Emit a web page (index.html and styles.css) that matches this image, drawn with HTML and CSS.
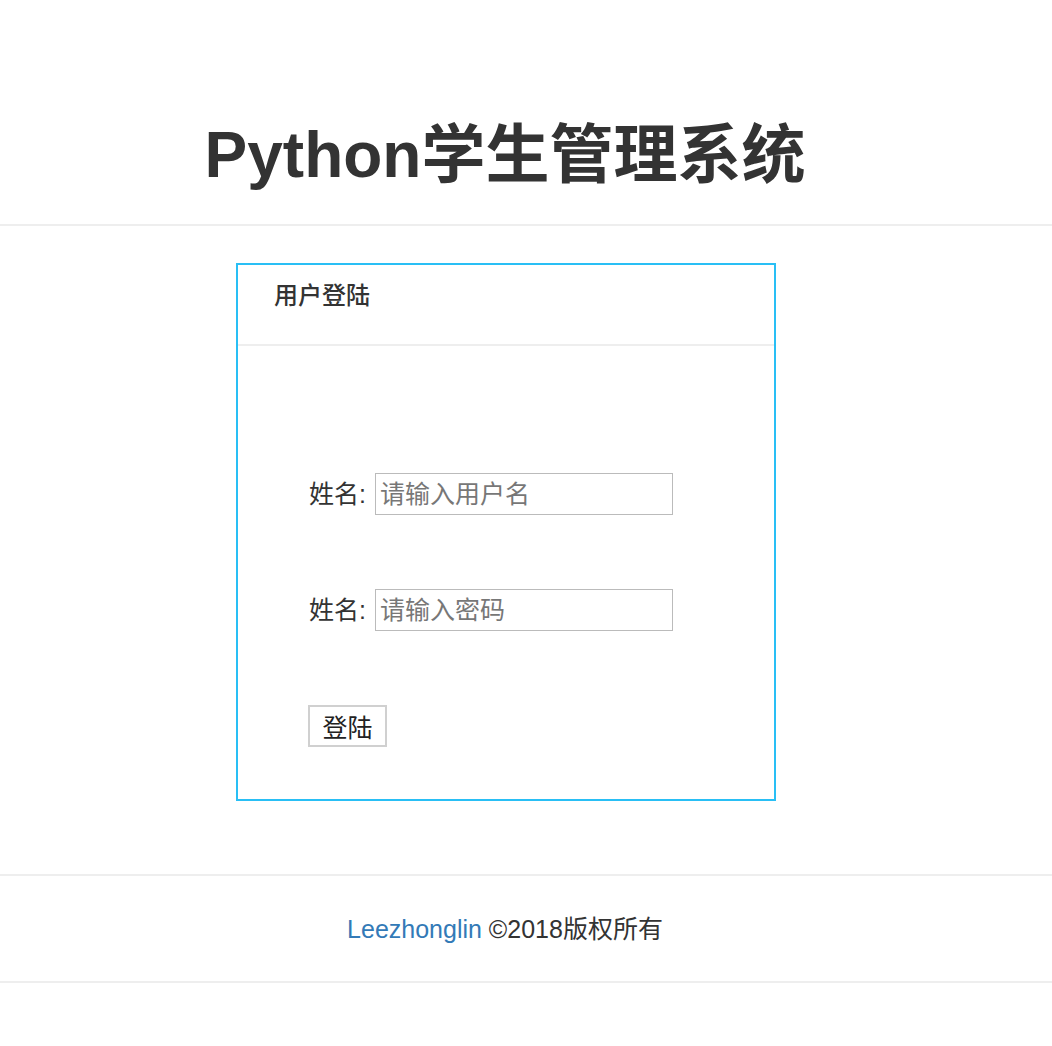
FILE: index.html
```html
<!DOCTYPE html>
<html lang="zh-CN">
<head>
<meta charset="utf-8">
<title>Python学生管理系统</title>
<link rel="stylesheet" href="styles.css">
</head>
<body>
<header class="site-header">
  <div class="wrap">
    <h1 class="title">Python学生管理系统</h1>
  </div>
</header>
<main class="main">
  <section class="panel">
    <div class="panel-heading">用户登陆</div>
    <form class="panel-body">
      <div class="row">
        <label class="label">姓名:</label>
        <input class="field" type="text" placeholder="请输入用户名">
      </div>
      <div class="row">
        <label class="label">姓名:</label>
        <input class="field" type="password" placeholder="请输入密码">
      </div>
      <div class="row">
        <button class="btn" type="button">登陆</button>
      </div>
    </form>
  </section>
</main>
<footer class="site-footer">
  <div class="wrap">
    <p class="copy"><a class="author" href="#">Leezhonglin</a> ©2018版权所有</p>
  </div>
</footer>
</body>
</html>
```
FILE: styles.css
```css
html, body {
  margin: 0;
  padding: 0;
  background: #fff;
}
body {
  font-family: "Liberation Sans", "Noto Sans CJK SC", sans-serif;
  color: #333;
}
.wrap {
  width: 1010px;
  text-align: center;
}
.site-header {
  padding-top: 123px;
  height: 101px;
  border-bottom: 2px solid #eee;
}
.title {
  margin: 0;
  font-size: 64px;
  line-height: 64px;
  font-weight: bold;
  color: #333;
}
.main {
  padding: 37px 0 73px 236px;
}
.panel {
  width: 536px;
  height: 534px;
  border: 2px solid #29bff5;
}
.panel-heading {
  height: 81px;
  box-sizing: border-box;
  padding: 19px 0 0 36px;
  font-size: 24px;
  line-height: 24px;
  font-weight: 500;
  color: #333;
  border-bottom: 2px solid #eee;
}
.panel-body {
  display: flex;
  flex-direction: column;
  gap: 74px;
  padding: 127px 0 0 71px;
  margin: 0;
}
.row {
  display: flex;
  align-items: center;
  gap: 9px;
  height: 42px;
}
.label {
  font-size: 25px;
  line-height: 42px;
  color: #333;
}
.field {
  width: 298px;
  height: 42px;
  box-sizing: border-box;
  border: 1px solid #bbb;
  padding: 0 4px;
  font-family: "Liberation Sans", "Noto Sans CJK SC", sans-serif;
  font-size: 25px;
  color: #333;
  outline: none;
}
.field::placeholder {
  color: #777;
}
.btn {
  width: 79px;
  height: 42px;
  margin-left: -1px;
  box-sizing: border-box;
  border: 2px solid #d0d0d0;
  background: #fff;
  font-family: "Liberation Sans", "Noto Sans CJK SC", sans-serif;
  font-size: 25px;
  color: #222;
  padding: 0;
}
.site-footer {
  border-top: 2px solid #eee;
  border-bottom: 2px solid #eee;
  height: 105px;
  display: flex;
  align-items: center;
}
.copy {
  margin: 0;
  font-size: 25px;
  line-height: 30px;
  color: #333;
}
.author {
  color: #337ab7;
  text-decoration: none;
}
```
